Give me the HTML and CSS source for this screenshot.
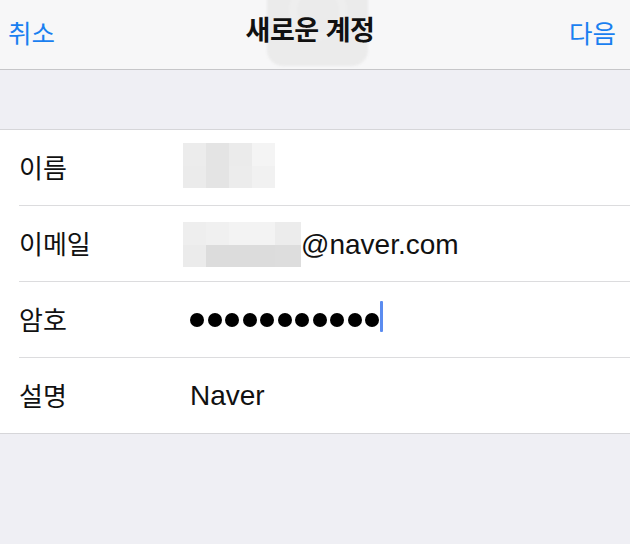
FILE: index.html
```html
<!DOCTYPE html>
<html lang="ko">
<head>
<meta charset="utf-8">
<link rel="stylesheet" href="styles.css">
</head>
<body>
<div class="screen">
  <header class="navbar">
    <div class="ghost"><div class="ghost-ring"></div></div>
    <span class="nav-btn">취소</span>
    <span class="nav-title">새로운 계정</span>
    <span class="nav-btn">다음</span>
  </header>
  <div class="spacer"></div>
  <section class="form">
    <div class="row">
      <span class="label">이름</span>
      <div class="value">
        <div class="mosaic m1">
          <i style="background:#ececec"></i><i style="background:#e4e4e4"></i><i style="background:#ebebeb"></i><i style="background:#f4f4f4"></i>
          <i style="background:#ebebeb"></i><i style="background:#e4e4e4"></i><i style="background:#ececec"></i><i style="background:#f1f1f1"></i>
        </div>
      </div>
    </div>
    <div class="row">
      <span class="label">이메일</span>
      <div class="value">
        <div class="mosaic m2">
          <i style="background:#eeeeee"></i><i style="background:#f0f0f0"></i><i style="background:#f3f3f3"></i><i style="background:#f3f3f3"></i><i style="background:#ececec"></i>
          <i style="background:#ebebeb"></i><i style="background:#dcdcdc"></i><i style="background:#dcdcdc"></i><i style="background:#dcdcdc"></i><i style="background:#dddddd"></i>
        </div>
        <span class="text">@naver.com</span>
      </div>
    </div>
    <div class="row">
      <span class="label">암호</span>
      <div class="value">
        <div class="dots"><i></i><i></i><i></i><i></i><i></i><i></i><i></i><i></i><i></i><i></i><i></i></div>
        <span class="cursor"></span>
      </div>
    </div>
    <div class="row">
      <span class="label">설명</span>
      <div class="value"><span class="text naver">Naver</span></div>
    </div>
  </section>
</div>
</body>
</html>
```

FILE: styles.css
```css
* { box-sizing: border-box; }
html, body { margin: 0; padding: 0; }
body {
  width: 630px;
  height: 544px;
  background: #efeff4;
  font-family: "Noto Sans CJK KR", "Liberation Sans", sans-serif;
  overflow: hidden;
}
.screen { display: flex; flex-direction: column; }
.navbar {
  position: relative;
  height: 70px;
  background: #f7f7f8;
  border-bottom: 1px solid #c6c6c9;
  display: flex;
  align-items: center;
  justify-content: space-between;
  padding: 0 14px 6px 8px;
}
.ghost {
  position: absolute;
  left: 267px;
  top: -20px;
  width: 101px;
  height: 86px;
  border-radius: 16px;
  background: #ebebeb;
  filter: blur(1px);
  overflow: hidden;
}
.ghost-ring {
  position: absolute;
  left: 22px;
  top: 2px;
  width: 58px;
  height: 58px;
  border-radius: 50%;
  border: 8px solid #eeeeee;
}
.nav-btn {
  position: relative;
  font-size: 25.5px;
  color: #1a7ff0;
  line-height: 1;
}
.nav-title {
  position: absolute;
  left: 0;
  right: 0;
  top: 11px;
  text-align: center;
  font-size: 27px;
  font-weight: 700;
  letter-spacing: -0.5px;
  color: #111;
  padding-right: 10px;
  line-height: 1.3;
}
.spacer { height: 59px; }
.form {
  background: #ffffff;
  border-top: 1px solid #d6d6d9;
  border-bottom: 1px solid #d6d6d9;
}
.row {
  height: 76px;
  display: flex;
  align-items: center;
  margin-left: 19px;
  border-bottom: 1px solid #dcdcde;
}
.row:last-child { border-bottom: none; height: 75px; }
.label {
  width: 164px;
  flex: none;
  font-size: 26px;
  color: #111;
  line-height: 1;
  padding-bottom: 2px;
}
.value {
  display: flex;
  align-items: center;
  height: 100%;
}
.mosaic {
  display: grid;
  grid-template-rows: 23px 22px;
}
.mosaic i { display: block; }
.m1 { grid-template-columns: repeat(4, 23px); margin-top: -4px; }
.m2 { grid-template-columns: 23px 23px 23px 23px 26px; margin-top: 2px; }
.text {
  font-family: "Liberation Sans", Arial, sans-serif;
  font-size: 28px;
  color: #111;
  line-height: 1;
  margin-top: 2px;
}
.naver { margin-left: 7px; margin-top: 0; }
.dots {
  display: flex;
  gap: 3.5px;
  margin-left: 7px;
}
.dots i {
  display: block;
  width: 14px;
  height: 14px;
  border-radius: 50%;
  background: #000;
}
.cursor {
  display: block;
  width: 3px;
  height: 31px;
  background: #5b8cf0;
  margin-left: 1px;
  margin-top: -6px;
  border-radius: 1px;
}
```
